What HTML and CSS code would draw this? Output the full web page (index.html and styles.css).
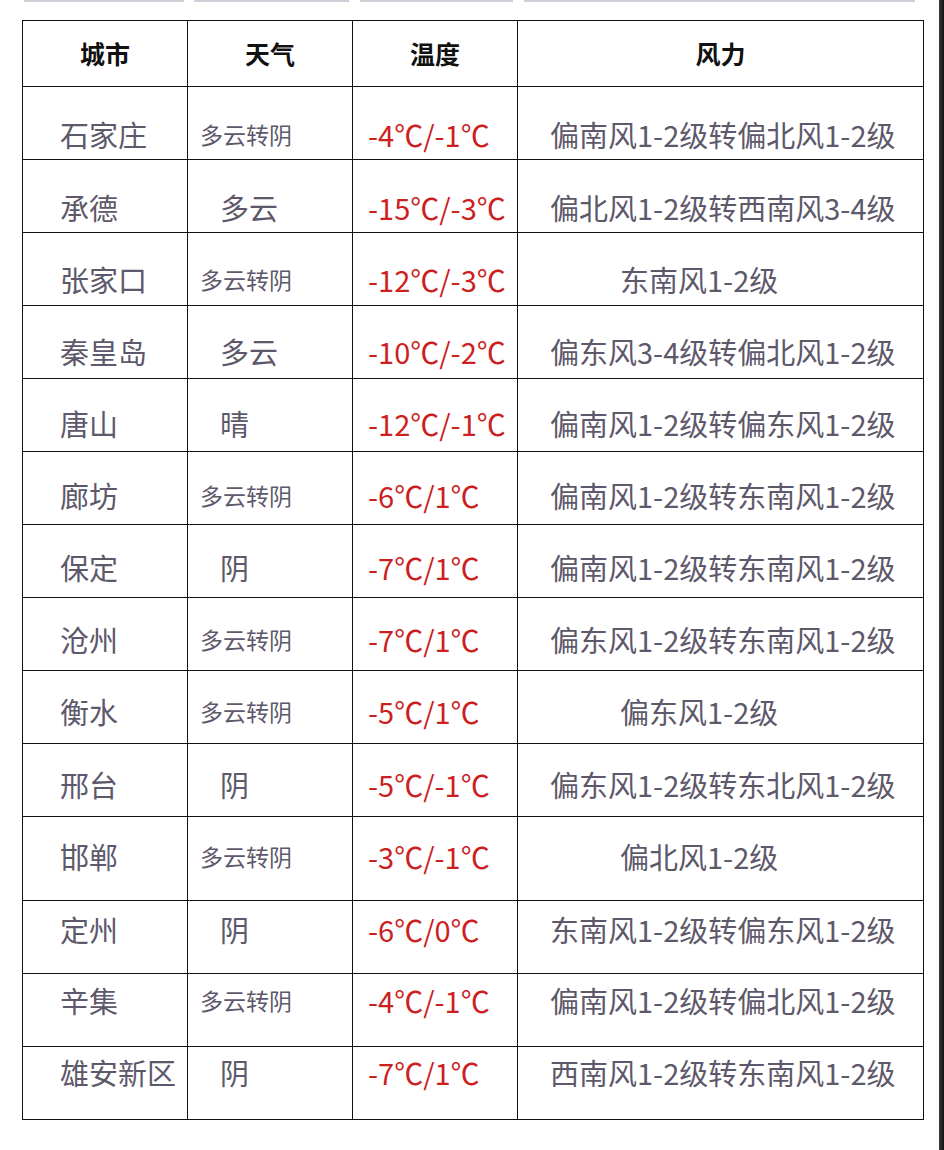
FILE: index.html
```html
<!DOCTYPE html>
<html lang="zh-CN">
<head>
<meta charset="utf-8">
<title>河北天气</title>
<link rel="stylesheet" href="styles.css">
</head>
<body>
<div class="page">
  <main class="content">
    <div class="prev-table">
      <span class="seg s1"></span><span class="seg s2"></span><span class="seg s3"></span><span class="seg s4"></span>
    </div>
    <table class="weather">
      <colgroup>
        <col class="c-city"><col class="c-sky"><col class="c-temp"><col class="c-wind">
      </colgroup>
      <thead>
        <tr><th>城市</th><th>天气</th><th>温度</th><th>风力</th></tr>
      </thead>
      <tbody>
        <tr><td class="city">石家庄</td><td class="sky small">多云转阴</td><td class="temp">-4℃/-1℃</td><td class="wind">偏南风1-2级转偏北风1-2级</td></tr>
        <tr><td class="city">承德</td><td class="sky">多云</td><td class="temp">-15℃/-3℃</td><td class="wind">偏北风1-2级转西南风3-4级</td></tr>
        <tr><td class="city">张家口</td><td class="sky small">多云转阴</td><td class="temp">-12℃/-3℃</td><td class="wind short">东南风1-2级</td></tr>
        <tr><td class="city">秦皇岛</td><td class="sky">多云</td><td class="temp">-10℃/-2℃</td><td class="wind">偏东风3-4级转偏北风1-2级</td></tr>
        <tr><td class="city">唐山</td><td class="sky">晴</td><td class="temp">-12℃/-1℃</td><td class="wind">偏南风1-2级转偏东风1-2级</td></tr>
        <tr><td class="city">廊坊</td><td class="sky small">多云转阴</td><td class="temp">-6℃/1℃</td><td class="wind">偏南风1-2级转东南风1-2级</td></tr>
        <tr><td class="city">保定</td><td class="sky">阴</td><td class="temp">-7℃/1℃</td><td class="wind">偏南风1-2级转东南风1-2级</td></tr>
        <tr><td class="city">沧州</td><td class="sky small">多云转阴</td><td class="temp">-7℃/1℃</td><td class="wind">偏东风1-2级转东南风1-2级</td></tr>
        <tr><td class="city">衡水</td><td class="sky small">多云转阴</td><td class="temp">-5℃/1℃</td><td class="wind short">偏东风1-2级</td></tr>
        <tr><td class="city">邢台</td><td class="sky">阴</td><td class="temp">-5℃/-1℃</td><td class="wind">偏东风1-2级转东北风1-2级</td></tr>
        <tr class="tall"><td class="city">邯郸</td><td class="sky small">多云转阴</td><td class="temp">-3℃/-1℃</td><td class="wind short">偏北风1-2级</td></tr>
        <tr><td class="city">定州</td><td class="sky">阴</td><td class="temp">-6℃/0℃</td><td class="wind">东南风1-2级转偏东风1-2级</td></tr>
        <tr><td class="city">辛集</td><td class="sky small">多云转阴</td><td class="temp">-4℃/-1℃</td><td class="wind">偏南风1-2级转偏北风1-2级</td></tr>
        <tr><td class="city">雄安新区</td><td class="sky">阴</td><td class="temp">-7℃/1℃</td><td class="wind">西南风1-2级转东南风1-2级</td></tr>
      </tbody>
    </table>
  </main>
  <div class="edge"></div>
</div>
</body>
</html>
```

FILE: styles.css
```css
* { box-sizing: border-box; }

html, body {
  margin: 0;
  padding: 0;
  background: #ffffff;
}

body {
  font-family: "Noto Sans CJK SC", "Noto Sans", sans-serif;
  color: #5e586b;
}

.page {
  display: flex;
  width: 944px;
  height: 1150px;
  overflow: hidden;
}

.content {
  flex: 1;
  padding-left: 22px;
}

.edge {
  width: 5px;
  background: linear-gradient(to right, #3a3a3a, #111111);
}

.prev-table {
  display: flex;
  height: 2px;
  margin-left: 2px;
  margin-bottom: 18px;
}

.seg {
  display: block;
  height: 2px;
  background: #cfcfd8;
}
.s1 { width: 160px; }
.s2 { width: 155px; margin-left: 10px; }
.s3 { width: 153px; margin-left: 11px; }
.s4 { width: 391px; margin-left: 11px; }

.weather {
  border-collapse: collapse;
  table-layout: fixed;
  width: 901px;
}

.c-city { width: 165px; }
.c-sky { width: 165px; }
.c-temp { width: 165px; }
.c-wind { width: 406px; }

.weather th,
.weather td {
  border: 1px solid #111111;
  padding: 0;
  white-space: nowrap;
}

.weather thead tr { height: 66px; }

.weather th {
  font-size: 25px;
  font-weight: 700;
  color: #111111;
  text-align: center;
  vertical-align: middle;
  line-height: 30px;
  padding-bottom: 2px;
}

.weather tbody tr { height: 73px; }
.weather tbody tr.tall { height: 84px; }

.weather td {
  vertical-align: top;
  font-size: 29px;
  font-weight: 400;
  line-height: 36px;
}

.city { padding-left: 37px !important; }

.sky { padding-left: 32px !important; }
.sky.small {
  font-size: 23px;
  padding-left: 12px !important;
}

.temp {
  color: #cc1f1f;
  padding-left: 15px !important;
}

.wind { padding-left: 32px !important; }
.wind.short { padding-left: 102px !important; }

/* text drifts slightly upward row by row in the original */
.weather tbody tr:nth-child(1) td { padding-top: 29px; }
.weather tbody tr:nth-child(2) td { padding-top: 29px; }
.weather tbody tr:nth-child(3) td { padding-top: 28px; }
.weather tbody tr:nth-child(4) td { padding-top: 27px; }
.weather tbody tr:nth-child(5) td { padding-top: 26px; }
.weather tbody tr:nth-child(6) td { padding-top: 25px; }
.weather tbody tr:nth-child(7) td { padding-top: 24px; }
.weather tbody tr:nth-child(8) td { padding-top: 23px; }
.weather tbody tr:nth-child(9) td { padding-top: 22px; }
.weather tbody tr:nth-child(10) td { padding-top: 22px; }
.weather tbody tr:nth-child(11) td { padding-top: 21px; }
.weather tbody tr:nth-child(12) td { padding-top: 10px; }
.weather tbody tr:nth-child(13) td { padding-top: 8px; }
.weather tbody tr:nth-child(14) td { padding-top: 7px; }
```
